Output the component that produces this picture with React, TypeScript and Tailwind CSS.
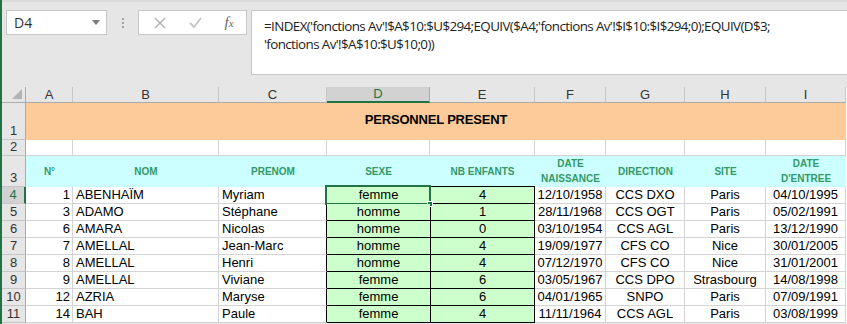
import React from "react";

const rows: (string | number)[][] = [
  [1, "ABENHAÏM", "Myriam", "femme", 4, "12/10/1958", "CCS DXO", "Paris", "04/10/1995"],
  [3, "ADAMO", "Stéphane", "homme", 1, "28/11/1968", "CCS OGT", "Paris", "05/02/1991"],
  [6, "AMARA", "Nicolas", "homme", 0, "03/10/1954", "CCS AGL", "Paris", "13/12/1990"],
  [7, "AMELLAL", "Jean-Marc", "homme", 4, "19/09/1977", "CFS CO", "Nice", "30/01/2005"],
  [8, "AMELLAL", "Henri", "homme", 4, "07/12/1970", "CFS CO", "Nice", "31/01/2001"],
  [9, "AMELLAL", "Viviane", "femme", 6, "03/05/1967", "CCS DPO", "Strasbourg", "14/08/1998"],
  [12, "AZRIA", "Maryse", "femme", 6, "04/01/1965", "SNPO", "Paris", "07/09/1991"],
  [14, "BAH", "Paule", "femme", 4, "11/11/1964", "CCS AGL", "Paris", "03/08/1999"],
];

const letters = ["A", "B", "C", "D", "E", "F", "G", "H", "I"];

const RowHead: React.FC<{ n: number; active?: boolean }> = ({ n, active }) => (
  <div
    className={
      active
        ? "flex items-end justify-center bg-[#d2d2d2] border-r-2 border-r-[#217346] border-b border-b-[#c6c6c6] text-[#217346] text-[13px] leading-[16px]"
        : "flex items-end justify-center bg-[#e6e6e6] border-r border-r-[#ababab] border-b border-b-[#c6c6c6] text-[#333] text-[13px] leading-[16px]"
    }
  >
    {n}
  </div>
);

const App: React.FC = () => {
  return (
    <div className="w-[847px] h-[324px] overflow-hidden bg-[#e6e6e6] border-l-2 border-[#217346] font-['Liberation_Sans',Arial,sans-serif] text-black">
      {/* formula bar */}
      <div className="h-[87px] border-t-2 border-t-[#dadada] flex items-start pt-[8px]">
        <div className="ml-[4px] w-[101px] h-[25px] bg-white border border-[#c6c6c6] flex items-center justify-between pl-[7px] pr-[6px] text-[14px] text-[#333] font-['Open_Sans',sans-serif]">
          <span>D4</span>
          <svg width="8" height="5" viewBox="0 0 8 5">
            <path d="M0 0 L8 0 L4 5 Z" fill="#7a7a7a" />
          </svg>
        </div>
        <div className="w-[31px] h-[25px] flex flex-col items-center justify-center gap-[2px]">
          <span className="w-[2px] h-[2px] bg-[#a6a6a6]" />
          <span className="w-[2px] h-[2px] bg-[#a6a6a6]" />
          <span className="w-[2px] h-[2px] bg-[#a6a6a6]" />
        </div>
        <div className="w-[109px] h-[25px] bg-white border border-[#c6c6c6] flex items-center justify-around pl-[4px] pr-[1px]">
          <svg width="12" height="12" viewBox="0 0 12 12">
            <path d="M1 1 L11 11 M11 1 L1 11" stroke="#b0b0b0" strokeWidth="1.4" />
          </svg>
          <svg width="13" height="11" viewBox="0 0 13 11">
            <path d="M1 6 L5 10 L12 1" stroke="#c4c4c4" strokeWidth="1.8" fill="none" />
          </svg>
          <span className="font-['Liberation_Serif',serif] italic text-[15px] text-[#666] leading-none">
            f<span className="text-[11px]">x</span>
          </span>
        </div>
        <div className="ml-[4px] flex-1 h-[65px] bg-white border border-r-0 border-[#c6c6c6] pl-[12px] pt-[6px] text-[13.4px] leading-[18px] text-[#222] font-['Open_Sans',sans-serif] tracking-[-0.6px]">
          =INDEX('fonctions Av'!$A$10:$U$294;EQUIV($A4;'fonctions Av'!$I$10:$I$294;0);EQUIV(D$3;
          <br />
          'fonctions Av'!$A$10:$U$10;0))
        </div>
      </div>

      {/* sheet */}
      <div className="grid grid-cols-[24px_47px_146px_108px_103px_105px_71px_79px_81px_80px] grid-rows-[16px_37px_16px_31px_repeat(8,17px)] bg-white">
        {/* column header */}
        <div className="relative bg-[#e6e6e6] border-r border-r-[#ababab] border-b border-b-[#ababab]">
          <svg className="absolute right-[3px] bottom-[3px]" width="10" height="10" viewBox="0 0 10 10">
            <path d="M10 0 L10 10 L0 10 Z" fill="#b4b4b4" />
          </svg>
        </div>
        {letters.map((l) =>
          l === "D" ? (
            <div
              key={l}
              className="flex items-center justify-center bg-[#d2d2d2] border-r border-r-[#ababab] border-b-2 border-b-[#217346] text-[13px] text-[#217346]"
            >
              {l}
            </div>
          ) : (
            <div
              key={l}
              className="flex items-center justify-center bg-[#e6e6e6] border-r border-r-[#c6c6c6] border-b border-b-[#ababab] text-[13px] text-[#333]"
            >
              {l}
            </div>
          )
        )}

        {/* row 1 */}
        <RowHead n={1} />
        <div className="col-span-9 bg-[#fdcb99] flex items-center justify-center pb-[3px] font-bold text-[13px] tracking-[-0.2px]">
          PERSONNEL PRESENT
        </div>

        {/* row 2 */}
        <RowHead n={2} />
        {letters.map((l) => (
          <div key={l} className="border-r border-b border-[#d4d4d4]" />
        ))}

        {/* row 3 */}
        <RowHead n={3} />
        <div className="bg-[#ccffff] border-b border-b-[#ccffff] flex items-center justify-center text-[10px] font-bold text-[#339966]">N°</div>
        <div className="bg-[#ccffff] border-b border-b-[#ccffff] flex items-center justify-center text-[10px] font-bold text-[#339966]">NOM</div>
        <div className="bg-[#ccffff] border-b border-b-[#ccffff] flex items-center justify-center text-[10px] font-bold text-[#339966]">PRENOM</div>
        <div className="bg-[#ccffff] border-b border-b-black flex items-center justify-center text-[10px] font-bold text-[#339966]">SEXE</div>
        <div className="bg-[#ccffff] border-b border-b-black flex items-center justify-center text-[10px] font-bold text-[#339966]">NB ENFANTS</div>
        <div className="bg-[#ccffff] border-b border-b-[#ccffff] flex flex-col items-center justify-center text-[10px] leading-[15px] font-bold text-[#339966] text-center">
          <span>DATE</span>
          <span>NAISSANCE</span>
        </div>
        <div className="bg-[#ccffff] border-b border-b-[#ccffff] flex items-center justify-center text-[10px] font-bold text-[#339966]">DIRECTION</div>
        <div className="bg-[#ccffff] border-b border-b-[#ccffff] flex items-center justify-center text-[10px] font-bold text-[#339966]">SITE</div>
        <div className="bg-[#ccffff] border-b border-b-[#ccffff] flex flex-col items-center justify-center text-[10px] leading-[15px] font-bold text-[#339966] text-center">
          <span>DATE</span>
          <span>D'ENTREE</span>
        </div>

        {/* data rows */}
        {rows.map((r, i) => (
          <React.Fragment key={i}>
            <RowHead n={i + 4} active={i === 0} />
            <div className="border-r border-b border-[#d4d4d4] flex items-center justify-end pr-[2px] text-[13px]">{r[0]}</div>
            <div className="border-r border-b border-[#d4d4d4] flex items-center pl-[3px] text-[13px]">{r[1]}</div>
            <div className="border-r border-r-black border-b border-b-[#d4d4d4] flex items-center pl-[3px] text-[13px]">{r[2]}</div>
            <div className="relative bg-[#ccffcc] border-b border-b-black flex items-center justify-center text-[13px]">
              {r[3]}
              {i === 0 && (
                <>
                  <div className="absolute left-[-2px] top-[-2px] right-[-1px] bottom-[-2px] border-2 border-[#217346]" />
                  <div className="absolute right-[-3px] bottom-[-4px] w-[6px] h-[6px] bg-[#217346] border border-white" />
                </>
              )}
            </div>
            <div className="bg-[#ccffcc] border-l border-l-black border-r border-r-black border-b border-b-black flex items-center justify-center text-[13px]">{r[4]}</div>
            <div className="border-r border-b border-[#d4d4d4] flex items-center justify-center text-[13px]">{r[5]}</div>
            <div className="border-r border-b border-[#d4d4d4] flex items-center justify-center text-[13px]">{r[6]}</div>
            <div className="border-r border-b border-[#d4d4d4] flex items-center justify-center text-[13px]">{r[7]}</div>
            <div className="border-r border-b border-[#d4d4d4] flex items-center justify-center text-[13px]">{r[8]}</div>
          </React.Fragment>
        ))}
      </div>
    </div>
  );
};

export default App;
